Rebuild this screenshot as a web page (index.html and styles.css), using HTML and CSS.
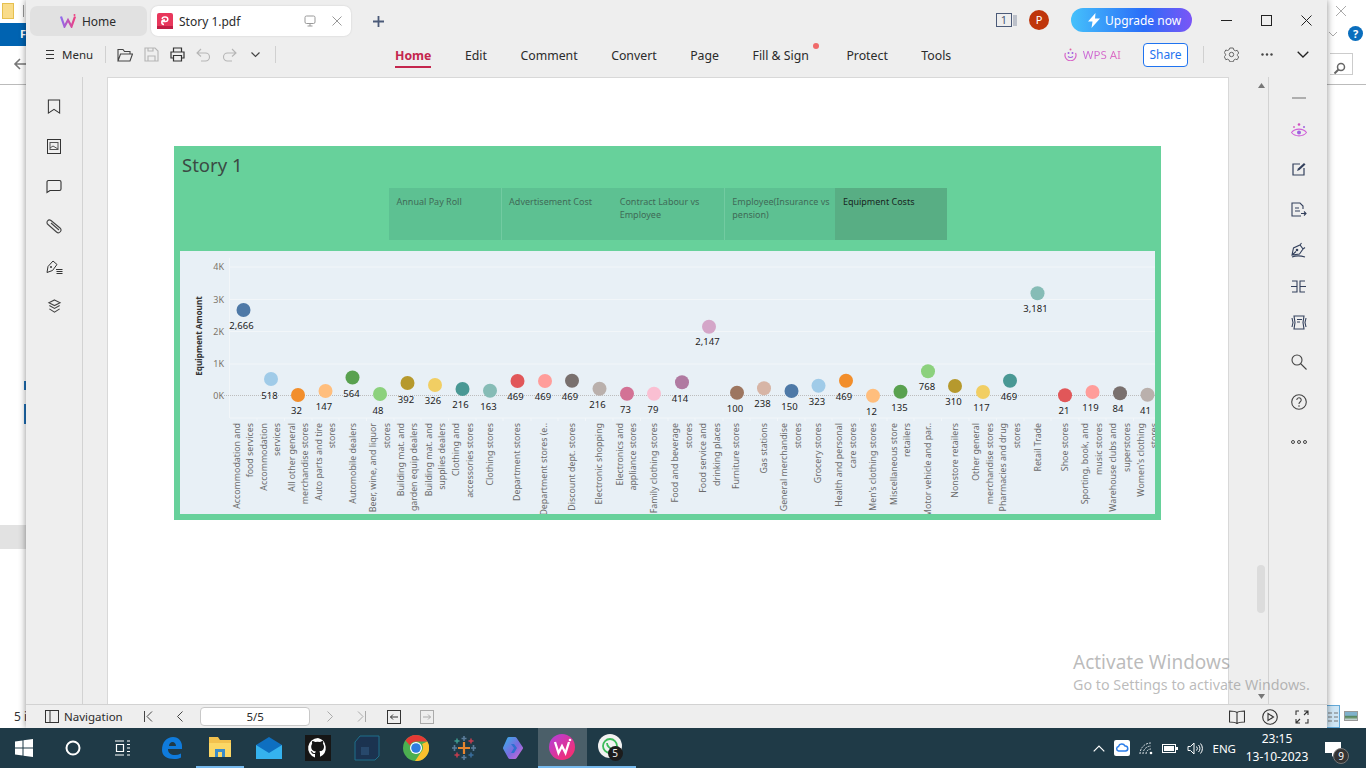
FILE: index.html
```html
<!DOCTYPE html>
<html>
<head>
    <title>Story 1.pdf</title>
    <link rel="stylesheet" href="styles.css">
</head>
<body>
<div class="desktop">
    <div class="screen">
        <!-- windows behind the reader -->
        <div class="back-left">
            <div class="back-folder"></div>
            <div class="back-pipe"></div>
            <div class="back-ribbon">F</div>
            <svg class="back-arrow" width="14" height="12" viewBox="0 0 14 12"><path d="M14 6H2M7 1L2 6l5 5" fill="none" stroke="#777" stroke-width="1.6"/></svg>
            <div class="back-rule"></div>
            <div class="back-mark one"></div>
            <div class="back-mark two"></div>
            <div class="back-row"></div>
            <div class="back-count">5 i</div>
        </div>
        <div class="back-right">
            <svg class="back-x" width="12" height="12" viewBox="0 0 12 12"><path d="M1 1l10 10M11 1L1 11" stroke="#aaa" fill="none"/></svg>
            <svg class="back-chev" width="10" height="6" viewBox="0 0 10 6"><path d="M1 1l4 4 4-4" stroke="#aaa" fill="none"/></svg>
            <div class="back-help">?</div>
            <div class="back-search">
                <svg width="13" height="13" viewBox="0 0 13 13"><circle cx="8" cy="5" r="3.5" fill="none" stroke="#666" stroke-width="1.5"/><path d="M5.5 7.5L1.5 11.5" stroke="#666" stroke-width="2"/></svg>
            </div>
            <div class="back-rule"></div>
            <div class="back-list">
                <svg width="12" height="22" viewBox="0 0 12 22"><path d="M1 7h4M7 7h4M1 11h4M7 11h4M1 15h4M7 15h4" stroke="#777"/></svg>
            </div>
            <div class="back-thumb"></div>
        </div>

        <div class="app">
            <div class="titlebar">
                <div class="tab tab-home">
                    <svg width="16" height="14" viewBox="0 0 16 14"><defs><linearGradient id="homew" x1="0" y1="0" x2="1" y2="0"><stop offset="0" stop-color="#8f6cf0"/><stop offset="1" stop-color="#ee3f80"/></linearGradient></defs><path d="M1 2.5l3.5 10L8 6l3.5 6.5L15 2.5" fill="none" stroke="url(#homew)" stroke-width="2.2"/><circle cx="14.5" cy="1" r="1" fill="#ee3f80"/></svg>
                    <span>Home</span>
                </div>
                <div class="tab tab-doc">
                    <svg class="pdf-icon" width="16" height="16" viewBox="0 0 16 16"><rect width="16" height="16" rx="2" fill="#e8375c"/><rect y="13" width="16" height="3" fill="#c01f45"/><path d="M5 8.5h3.500a2.300 2.300 0 0 0 0-4.600H7.500A2.300 2.300 0 0 0 5.200 6M8 7H7a2.200 2.200 0 0 0 0 4.400" fill="none" stroke="#fff" stroke-width="1.5"/></svg>
                    <span class="tab-name">Story 1.pdf</span>
                    <svg class="tab-screen" width="12" height="12" viewBox="0 0 12 12"><rect x="1" y="1" width="10" height="7.5" rx="1.5" fill="none" stroke="#999"/><path d="M6 9v2M3.500 11h5" stroke="#999"/></svg>
                    <svg class="tab-close" width="10" height="10" viewBox="0 0 10 10"><path d="M.5.5l9 9M9.500.5l-9 9" stroke="#999"/></svg>
                </div>
                <svg class="new-tab" width="13" height="13" viewBox="0 0 13 13"><path d="M6.5 1v11M1 6.5h11" stroke="#4b5a78" stroke-width="1.8"/></svg>
                <div class="title-right">
                    <svg class="win-count" width="21" height="14" viewBox="0 0 21 14"><rect x=".5" y=".5" width="15" height="13" fill="none" stroke="#4b5a78"/><path d="M18 2v11M20 2v11" stroke="#8a93a6"/><text x="8" y="11" class="win-count-num">1</text></svg>
                    <div class="avatar">P</div>
                    <div class="upgrade">
                        <svg width="12" height="15" viewBox="0 0 12 15"><path d="M7.5 0L0 8.5h4.500L3.500 15 12 5.500H7z" fill="#fff"/></svg>
                        <span>Upgrade now</span>
                    </div>
                    <div class="win-btn"><svg width="11" height="11" viewBox="0 0 11 11"><path d="M0 5.5h11" stroke="#222"/></svg></div>
                    <div class="win-btn"><svg width="11" height="11" viewBox="0 0 11 11"><rect x=".5" y=".5" width="10" height="10" fill="none" stroke="#222"/></svg></div>
                    <div class="win-btn"><svg width="11" height="11" viewBox="0 0 11 11"><path d="M.5.5l10 10M10.500.5l-10 10" stroke="#222"/></svg></div>
                </div>
            </div>

            <div class="toolbar">
                <div class="quick">
                    <svg width="11" height="11" viewBox="0 0 11 11"><path d="M1 1.5h8M1 5.5h8M1 9.5h8" stroke="#333"/></svg>
                    <span class="menu-label">Menu</span>
                    <i class="sep"></i>
                    <svg class="tool" width="16" height="14" viewBox="0 0 16 14"><path d="M1 13V1.500h5l1.500 2H13V6M1 13l2.500-7H15.500L13 13z" fill="none" stroke="#444" stroke-width="1.1"/></svg>
                    <svg class="tool" width="15" height="15" viewBox="0 0 15 15"><path d="M1 1h10l3 3v10H1zM4 14V9h7v5M4 1v3h5V1" fill="none" stroke="#b5b5b5" stroke-width="1.1"/></svg>
                    <svg class="tool" width="15" height="15" viewBox="0 0 15 15"><path d="M3.5 5V1h8v4M3.500 11H1V5h13v6h-2.500M3.500 8.500h8V14h-8z" fill="none" stroke="#333" stroke-width="1.2"/></svg>
                    <svg class="tool" width="15" height="14" viewBox="0 0 15 14"><path d="M5 1L1 5l4 3.500M1 5h8.500a4 4 0 0 1 0 8H5" fill="none" stroke="#b5b5b5" stroke-width="1.1"/></svg>
                    <svg class="tool" width="15" height="14" viewBox="0 0 15 14"><path d="M10 1l4 4-4 3.500M14 5H5.500a4 4 0 0 0 0 8H10" fill="none" stroke="#b5b5b5" stroke-width="1.1"/></svg>
                    <svg class="tool tool-chev" width="9" height="6" viewBox="0 0 9 6"><path d="M.5.5l4 4 4-4" fill="none" stroke="#444" stroke-width="1.2"/></svg>
                    <i class="sep sep-end"></i>
                </div>
                <div class="menu-tabs">
                    <span class="menu-tab active">Home</span>
                    <span class="menu-tab">Edit</span>
                    <span class="menu-tab">Comment</span>
                    <span class="menu-tab">Convert</span>
                    <span class="menu-tab">Page</span>
                    <span class="menu-tab">Fill &amp; Sign<b class="red-dot"></b></span>
                    <span class="menu-tab protect">Protect</span>
                    <span class="menu-tab">Tools</span>
                </div>
                <div class="tool-right">
                    <svg width="13" height="13" viewBox="0 0 13 13"><path d="M1.5 5a5.500 5.500 0 1 0 10 0" fill="none" stroke="#d868c8" stroke-width="1.2"/><path d="M4 8.500c1.500 1.200 3.500 1.200 5 0" fill="none" stroke="#a060e0" stroke-width="1.2"/><circle cx="4.5" cy="5" r="1" fill="#a060e0"/><circle cx="8.5" cy="5" r="1" fill="#a060e0"/><circle cx="6.5" cy="1.5" r="1" fill="#e060a0"/></svg>
                    <span class="wps-ai">WPS AI</span>
                    <span class="share">Share</span>
                    <i class="sep"></i>
                    <svg class="gear" width="15" height="15" viewBox="0 0 15 15"><path d="M5.800 1h3.400l.5 1.800 1.700 1 1.800-.5 1.500 2.700-1.300 1.500v1l1.300 1.500-1.500 2.700-1.800-.5-1.700 1-.5 1.600H5.800l-.5-1.600-1.700-1-1.800.5L.3 9.700l1.300-1.500v-1L.3 5.700 1.800 3l1.800.5 1.700-1z" fill="none" stroke="#666"/><circle cx="7.500" cy="7.500" r="2.200" fill="none" stroke="#666"/></svg>
                    <svg class="more" width="12" height="3" viewBox="0 0 12 3"><circle cx="1.500" cy="1.500" r="1.200" fill="#444"/><circle cx="6" cy="1.500" r="1.200" fill="#444"/><circle cx="10.500" cy="1.500" r="1.200" fill="#444"/></svg>
                    <svg class="collapse" width="12" height="7" viewBox="0 0 12 7"><path d="M.7.7L6 6 11.300.7" fill="none" stroke="#222" stroke-width="1.3"/></svg>
                </div>
            </div>

            <div class="workspace">
                <div class="left-rail">
                    <svg width="14" height="16" viewBox="0 0 14 16"><path d="M1 1h12v14l-6-4-6 4z" fill="none" stroke="#333" stroke-width="1.1"/></svg>
                    <svg width="14" height="15" viewBox="0 0 14 15"><rect x=".5" y=".5" width="13" height="14" fill="none" stroke="#333"/><rect x="3" y="3.500" width="8" height="7" fill="none" stroke="#555"/><path d="M3 9l3-2 5 3" fill="none" stroke="#555"/></svg>
                    <svg width="16" height="14" viewBox="0 0 16 14"><path d="M1 13V2.500a1.500 1.500 0 0 1 1.500-1.500h11a1.500 1.500 0 0 1 1.500 1.500v7a1.500 1.500 0 0 1-1.500 1.500H4z" fill="none" stroke="#333" stroke-width="1.1"/></svg>
                    <svg width="16" height="15" viewBox="0 0 16 15"><path d="M5 1.500l9 7.500a2.500 2.500 0 0 1-3.500 4L2 5.500A2.400 2.400 0 0 1 5 1.500zM5 4l8 7" fill="none" stroke="#444" stroke-width="1.1"/></svg>
                    <svg width="17" height="15" viewBox="0 0 17 15"><path d="M1 13.500l1-6 5-5.500 4 3.500-4.500 6zM10 10.500h6.500M10.500 12.500h6M10.500 14.500h6" fill="none" stroke="#333"/><circle cx="5" cy="8" r="1" fill="#333"/></svg>
                    <svg width="15" height="16" viewBox="0 0 15 16"><path d="M7.5 1l6 3-6 3-6-3zM2 7l5.500 3L13 7M2 10.500l5.500 3.500L13 10.500" fill="none" stroke="#444" stroke-width="1.1"/></svg>
                </div>

                <div class="doc-area">
                    <div class="page">
                        <div class="story">
                            <div class="story-title">Story 1</div>
                            <div class="story-tabs">
                                <div class="story-tab">Annual Pay Roll</div>
                                <div class="story-tab split">Advertisement Cost</div>
                                <div class="story-tab">Contract Labour vs Employee</div>
                                <div class="story-tab split">Employee(Insurance vs pension)</div>
                                <div class="story-tab current">Equipment Costs</div>
                            </div>
                            <div class="chart">
                                <svg width="975" height="263" viewBox="180 251 975 263">
                                    <g class="grid">
                                        <path d="M230 267H1155M230 299.5H1155M230 331.5H1155M230 364H1155"/>
                                        <path d="M229.5 258V418M230 418H1155"/>
                                        <path d="M257 418v3M284.5 418v3M312 418v3M339 418v3M366.5 418v3M394 418v3M421 418v3M448.5 418v3M476 418v3M503 418v3M531 418v3M558 418v3M585.5 418v3M613 418v3M640.5 418v3M668 418v3M695 418v3M723 418v3M750 418v3M777.5 418v3M805 418v3M832 418v3M859.5 418v3M887 418v3M914 418v3M941.5 418v3M969 418v3M996.5 418v3M1024 418v3M1051 418v3M1079 418v3M1106 418v3M1133.5 418v3"/>
                                    </g>
                                    <path class="zero" d="M224 395.5H1155"/>

                                    <g class="tick-label">
                                        <text x="224" y="270">4K</text>
                                        <text x="224" y="303">3K</text>
                                        <text x="224" y="335">2K</text>
                                        <text x="224" y="367">1K</text>
                                        <text x="224" y="399">0K</text>
                                    </g>
                                    <text class="axis-title" transform="translate(202 336) rotate(-90)">Equipment Amount</text>

                                    <g>
                                        <circle cx="243.5" cy="310" r="7" fill="#4e79a7"/>
                                        <circle cx="271" cy="379" r="7" fill="#a0cbe8"/>
                                        <circle cx="298" cy="395" r="7" fill="#f28e2b"/>
                                        <circle cx="325.5" cy="391" r="7" fill="#ffbe7d"/>
                                        <circle cx="352.5" cy="377.5" r="7" fill="#59a14f"/>
                                        <circle cx="380" cy="394" r="7" fill="#8cd17d"/>
                                        <circle cx="407.5" cy="383" r="7" fill="#b6992d"/>
                                        <circle cx="435" cy="385" r="7" fill="#f1ce63"/>
                                        <circle cx="462.5" cy="389" r="7" fill="#499894"/>
                                        <circle cx="490" cy="390.7" r="7" fill="#86bcb6"/>
                                        <circle cx="517.5" cy="381" r="7" fill="#e15759"/>
                                        <circle cx="545" cy="381" r="7" fill="#ff9d9a"/>
                                        <circle cx="572" cy="380.7" r="7" fill="#79706e"/>
                                        <circle cx="599.5" cy="388.7" r="7" fill="#bab0ac"/>
                                        <circle cx="627" cy="393.7" r="7" fill="#d37295"/>
                                        <circle cx="654" cy="393.7" r="7" fill="#fabfd2"/>
                                        <circle cx="682" cy="382.3" r="7" fill="#b07aa1"/>
                                        <circle cx="709" cy="326.7" r="7" fill="#d4a6c8"/>
                                        <circle cx="737" cy="392.7" r="7" fill="#9d7660"/>
                                        <circle cx="764" cy="388.3" r="7" fill="#d7b5a6"/>
                                        <circle cx="791.5" cy="391" r="7" fill="#4e79a7"/>
                                        <circle cx="818.5" cy="385.7" r="7" fill="#a0cbe8"/>
                                        <circle cx="846" cy="380.7" r="7" fill="#f28e2b"/>
                                        <circle cx="873" cy="395.7" r="7" fill="#ffbe7d"/>
                                        <circle cx="900.5" cy="391.7" r="7" fill="#59a14f"/>
                                        <circle cx="928" cy="371.3" r="7" fill="#8cd17d"/>
                                        <circle cx="955" cy="386" r="7" fill="#b6992d"/>
                                        <circle cx="983" cy="392" r="7" fill="#f1ce63"/>
                                        <circle cx="1010" cy="380.7" r="7" fill="#499894"/>
                                        <circle cx="1037.5" cy="293.3" r="7" fill="#86bcb6"/>
                                        <circle cx="1065" cy="395.3" r="7" fill="#e15759"/>
                                        <circle cx="1092.5" cy="392" r="7" fill="#ff9d9a"/>
                                        <circle cx="1120" cy="393.3" r="7" fill="#79706e"/>
                                        <circle cx="1147.5" cy="394.7" r="7" fill="#bab0ac"/>
                                    </g>

                                    <g class="value">
                                        <text x="241.5" y="328.5">2,666</text>
                                        <text x="269.5" y="398.5">518</text>
                                        <text x="296.5" y="413.5">32</text>
                                        <text x="324" y="409.5">147</text>
                                        <text x="351.5" y="396.5">564</text>
                                        <text x="378" y="413.5">48</text>
                                        <text x="406" y="402.5">392</text>
                                        <text x="433" y="404">326</text>
                                        <text x="460.5" y="407.5">216</text>
                                        <text x="488.5" y="409.5">163</text>
                                        <text x="515.5" y="399.5">469</text>
                                        <text x="543" y="399.5">469</text>
                                        <text x="570" y="399.5">469</text>
                                        <text x="597.5" y="407.5">216</text>
                                        <text x="625.5" y="412.5">73</text>
                                        <text x="653" y="412.5">79</text>
                                        <text x="680" y="401.5">414</text>
                                        <text x="707.5" y="345">2,147</text>
                                        <text x="735" y="411.5">100</text>
                                        <text x="762.5" y="407">238</text>
                                        <text x="789.5" y="409.5">150</text>
                                        <text x="817" y="404.5">323</text>
                                        <text x="844" y="399.5">469</text>
                                        <text x="871.5" y="414.5">12</text>
                                        <text x="899.5" y="410.5">135</text>
                                        <text x="927" y="390">768</text>
                                        <text x="953.5" y="404.5">310</text>
                                        <text x="981.5" y="411">117</text>
                                        <text x="1009" y="399.5">469</text>
                                        <text x="1035.5" y="312">3,181</text>
                                        <text x="1064" y="414">21</text>
                                        <text x="1090.5" y="411">119</text>
                                        <text x="1118" y="411.5">84</text>
                                        <text x="1145.5" y="413.5">41</text>
                                    </g>

                                    <g class="cat">
                                        <text transform="translate(240 423) rotate(-90)">Accommodation and</text>
                                        <text transform="translate(253 423) rotate(-90)">food services</text>
                                        <text transform="translate(267 423) rotate(-90)">Accommodation</text>
                                        <text transform="translate(280 423) rotate(-90)">services</text>
                                        <text transform="translate(295 423) rotate(-90)">All other general</text>
                                        <text transform="translate(308 423) rotate(-90)">merchandise stores</text>
                                        <text transform="translate(322 423) rotate(-90)">Auto parts and tire</text>
                                        <text transform="translate(335 423) rotate(-90)">stores</text>
                                        <text transform="translate(356 423) rotate(-90)">Automobile dealers</text>
                                        <text transform="translate(376 423) rotate(-90)">Beer, wine, and liquor</text>
                                        <text transform="translate(390 423) rotate(-90)">stores</text>
                                        <text transform="translate(404 423) rotate(-90)">Building mat. and</text>
                                        <text transform="translate(417 423) rotate(-90)">garden equip dealers</text>
                                        <text transform="translate(432 423) rotate(-90)">Building mat. and</text>
                                        <text transform="translate(445 423) rotate(-90)">supplies dealers</text>
                                        <text transform="translate(459 423) rotate(-90)">Clothing and</text>
                                        <text transform="translate(473 423) rotate(-90)">accessories stores</text>
                                        <text transform="translate(493 423) rotate(-90)">Clothing stores</text>
                                        <text transform="translate(520 423) rotate(-90)">Department stores</text>
                                        <text transform="translate(547 423) rotate(-90)">Department stores (e..</text>
                                        <text transform="translate(575 423) rotate(-90)">Discount dept. stores</text>
                                        <text transform="translate(602 423) rotate(-90)">Electronic shopping</text>
                                        <text transform="translate(623 423) rotate(-90)">Electronics and</text>
                                        <text transform="translate(636 423) rotate(-90)">appliance stores</text>
                                        <text transform="translate(657 423) rotate(-90)">Family clothing stores</text>
                                        <text transform="translate(678 423) rotate(-90)">Food and beverage</text>
                                        <text transform="translate(692 423) rotate(-90)">stores</text>
                                        <text transform="translate(706 423) rotate(-90)">Food service and</text>
                                        <text transform="translate(720 423) rotate(-90)">drinking places</text>
                                        <text transform="translate(739 423) rotate(-90)">Furniture stores</text>
                                        <text transform="translate(767 423) rotate(-90)">Gas stations</text>
                                        <text transform="translate(787 423) rotate(-90)">General merchandise</text>
                                        <text transform="translate(801 423) rotate(-90)">stores</text>
                                        <text transform="translate(821 423) rotate(-90)">Grocery stores</text>
                                        <text transform="translate(842 423) rotate(-90)">Health and personal</text>
                                        <text transform="translate(856 423) rotate(-90)">care stores</text>
                                        <text transform="translate(876 423) rotate(-90)">Men's clothing stores</text>
                                        <text transform="translate(897 423) rotate(-90)">Miscellaneous store</text>
                                        <text transform="translate(910 423) rotate(-90)">retailers</text>
                                        <text transform="translate(931 423) rotate(-90)">Motor vehicle and par..</text>
                                        <text transform="translate(958 423) rotate(-90)">Nonstore retailers</text>
                                        <text transform="translate(979 423) rotate(-90)">Other general</text>
                                        <text transform="translate(993 423) rotate(-90)">merchandise stores</text>
                                        <text transform="translate(1006 423) rotate(-90)">Pharmacies and drug</text>
                                        <text transform="translate(1020 423) rotate(-90)">stores</text>
                                        <text transform="translate(1041 423) rotate(-90)">Retail Trade</text>
                                        <text transform="translate(1068 423) rotate(-90)">Shoe stores</text>
                                        <text transform="translate(1088 423) rotate(-90)">Sporting, book, and</text>
                                        <text transform="translate(1102 423) rotate(-90)">music stores</text>
                                        <text transform="translate(1116 423) rotate(-90)">Warehouse clubs and</text>
                                        <text transform="translate(1130 423) rotate(-90)">superstores</text>
                                        <text transform="translate(1144 423) rotate(-90)">Women's clothing</text>
                                        <text transform="translate(1157 423) rotate(-90)">stores</text>
                                    </g>
                                </svg>
                            </div>
                        </div>
                    </div>
                    <div class="scrollbar">
                        <svg class="arrow-up" width="7" height="5" viewBox="0 0 7 5"><path d="M3.5 0L7 5H0z" fill="#777"/></svg>
                        <div class="scroll-thumb"></div>
                        <svg class="arrow-down" width="7" height="5" viewBox="0 0 7 5"><path d="M3.5 5L7 0H0z" fill="#777"/></svg>
                    </div>
                </div>

                <div class="right-rail">
                    <svg width="14" height="2" viewBox="0 0 14 2"><path d="M0 1h14" stroke="#999" stroke-width="1.5"/></svg>
                    <svg width="16" height="15" viewBox="0 0 16 15"><path d="M.5 9.500C4 5 12 5 15.500 9.500 12 14 4 14 .5 9.500z" fill="none" stroke="#d060d8" stroke-width="1.1"/><circle cx="8" cy="9.5" r="2" fill="#a060e0"/><circle cx="8" cy="1.5" r="1.3" fill="#d050c0"/><circle cx="3" cy="4" r="1" fill="#d868c8"/><circle cx="13" cy="4" r="1" fill="#a060e0"/></svg>
                    <svg width="14" height="14" viewBox="0 0 14 14"><path d="M8 2H1v11h11V6" fill="none" stroke="#33405c" stroke-width="1.2"/><path d="M5 9l1-2.500L12 1l1.500 1.500L7.500 8z" fill="#33405c"/></svg>
                    <svg width="16" height="15" viewBox="0 0 16 15"><path d="M12 7V4L9 1H1v13h9M4 6h4M4 9h5M10 11.500h5M13 9.500l2 2-2 2" fill="none" stroke="#33405c" stroke-width="1.1"/></svg>
                    <svg width="16" height="16" viewBox="0 0 16 16"><path d="M1 13l1.500-7L9 3l3 4-3.500 5zM1 13l4-3.500M9 3l1.500-2M12 7l2-1.500M1 15c4-1.500 8-1.500 13 0" fill="none" stroke="#33405c" stroke-width="1.1"/><circle cx="6" cy="8" r="1.3" fill="#33405c"/></svg>
                    <svg width="15" height="13" viewBox="0 0 15 13"><path d="M1 1h5v11H1M14 1H9v11h5M0 6.500h6M9 6.500h6" fill="none" stroke="#33405c" stroke-width="1.1"/></svg>
                    <svg width="16" height="15" viewBox="0 0 16 15"><path d="M3 1h10l-1 6.500 1 6.500H3l1-6.500zM1 3l1 4.500L1 12M15 3l-1 4.500 1 4.500M6 4.500h5M6 7h3" fill="none" stroke="#33405c" stroke-width="1.1"/></svg>
                    <svg width="16" height="16" viewBox="0 0 16 16"><circle cx="6" cy="6" r="5" fill="none" stroke="#444" stroke-width="1.1"/><path d="M9.5 9.500L15.500 15.500" stroke="#444" stroke-width="1.1"/></svg>
                    <svg width="16" height="16" viewBox="0 0 16 16"><circle cx="8" cy="8" r="7.3" fill="none" stroke="#444" stroke-width="1.1"/><path d="M5.8 6a2.200 2.200 0 1 1 3.500 1.800C8.300 8.500 8 9 8 10" fill="none" stroke="#444" stroke-width="1.1"/><circle cx="8" cy="12" r=".8" fill="#444"/></svg>
                    <svg width="16" height="4" viewBox="0 0 16 4"><circle cx="2" cy="2" r="1.5" fill="none" stroke="#444"/><circle cx="8" cy="2" r="1.5" fill="none" stroke="#444"/><circle cx="14" cy="2" r="1.5" fill="none" stroke="#444"/></svg>
                </div>
            </div>

            <div class="statusbar">
                <svg class="nav-icon" width="14" height="13" viewBox="0 0 14 13"><rect x=".5" y=".5" width="13" height="12" fill="none" stroke="#333"/><path d="M5 .5v12" stroke="#333"/></svg>
                <span class="nav-label">Navigation</span>
                <svg class="pg first" width="9" height="11" viewBox="0 0 9 11"><path d="M.5 0v11M8 .5l-5 5 5 5" fill="none" stroke="#444"/></svg>
                <svg class="pg prev" width="6" height="11" viewBox="0 0 6 11"><path d="M5.5.5l-5 5 5 5" fill="none" stroke="#444"/></svg>
                <div class="page-box">5/5</div>
                <svg class="pg next" width="6" height="11" viewBox="0 0 6 11"><path d="M.5.5l5 5-5 5" fill="none" stroke="#aaa"/></svg>
                <svg class="pg last" width="9" height="11" viewBox="0 0 9 11"><path d="M8.5 0v11M1 .5l5 5-5 5" fill="none" stroke="#aaa"/></svg>
                <svg class="pg hist-back" width="14" height="14" viewBox="0 0 14 14"><rect x=".5" y=".5" width="13" height="13" fill="none" stroke="#333"/><path d="M11 7H3.500M6 4.500L3.500 7 6 9.500" fill="none" stroke="#333"/></svg>
                <svg class="pg hist-next" width="14" height="14" viewBox="0 0 14 14"><rect x=".5" y=".5" width="13" height="13" fill="none" stroke="#aaa"/><path d="M3 7h7.500M8 4.500L10.500 7 8 9.500" fill="none" stroke="#aaa"/></svg>
                <div class="status-right">
                    <svg width="16" height="14" viewBox="0 0 16 14"><path d="M8 2.500C6 1 3 1 .5 1v11c2.500 0 5.500 0 7.500 1.500 2-1.500 5-1.500 7.500-1.500V1C13 1 10 1 8 2.500zM8 2.500v11" fill="none" stroke="#333" stroke-width="1.1"/></svg>
                    <svg width="16" height="16" viewBox="0 0 16 16"><circle cx="8" cy="8" r="7.3" fill="none" stroke="#333" stroke-width="1.1"/><path d="M6 4.500L11.500 8 6 11.500z" fill="none" stroke="#333" stroke-width="1.1"/></svg>
                    <svg width="14" height="14" viewBox="0 0 14 14"><path d="M9 1h4v4M13 1L9 5M5 13H1V9M1 13l4-4M1 5V1h3M13 9v4h-3" fill="none" stroke="#333" stroke-width="1.1"/></svg>
                </div>
            </div>
        </div>

        <div class="activate">
            <div class="activate-head">Activate Windows</div>
            <div class="activate-sub">Go to Settings to activate Windows.</div>
        </div>
    </div>

    <div class="taskbar">
        <div class="tb-item"><svg width="18" height="18" viewBox="0 0 18 18"><path d="M0 2.500l7.500-1v7H0zM8.500 1.300L18 0v8.500H8.500zM0 9.500h7.500v7l-7.500-1zM8.500 9.500H18V18l-9.500-1.300z" fill="#fff"/></svg></div>
        <div class="tb-item"><svg width="16" height="16" viewBox="0 0 16 16"><circle cx="8" cy="8" r="6.5" fill="none" stroke="#fff" stroke-width="2"/></svg></div>
        <div class="tb-item"><svg width="17" height="16" viewBox="0 0 17 16"><path d="M1 1h9M1 15h9M2.500 4.500h7v7h-7zM13 1h3M13 4.500h3M13 8h3M13 11.500h3M13 15h3" fill="none" stroke="#fff" stroke-width="1.2"/></svg></div>
        <div class="tb-item"><svg width="24" height="24" viewBox="0 0 24 24"><path d="M3 14C3 6 8 1 14 1c6 0 9 5 9 9v3H9c0 4 3 6 7 6 2 0 4-.5 6-1.500v4c-2 1-4 1.500-7 1.500-7 0-12-3-12-9zm7-4h7c0-2-1.500-4-3.500-4S10 8 10 10z" fill="#0f7bdc"/></svg></div>
        <div class="tb-item lit"><svg width="24" height="22" viewBox="0 0 24 22"><path d="M1 1h9l2 3h11v16H1z" fill="#f2c14e"/><path d="M1 7h22v14H1z" fill="#fbd766"/><rect x="7" y="13" width="10" height="8" fill="#3a8bc9"/><rect x="10" y="16" width="4" height="5" fill="#fbd766"/></svg></div>
        <div class="tb-item"><svg width="26" height="22" viewBox="0 0 26 22"><path d="M0 8L13 0l13 8v14H0z" fill="#0e6fc0"/><path d="M0 8l13 8 13-8v14H0z" fill="#35b2ee"/></svg></div>
        <div class="tb-item"><svg width="26" height="26" viewBox="0 0 26 26"><rect width="26" height="26" fill="#161616"/><path d="M13 3a10 10 0 0 0-3 19.500v-3.500c-3 .5-3.500-1.500-3.500-1.500-.5-1.200-1-1.500-1-1.500 1.200-.5 2 1 2 1 .8 1.500 2.300 1 2.800.8 0-.6.300-1 .6-1.300-2.300-.3-4.700-1.200-4.700-5 0-1.100.4-2 1-2.700-.2-.3-.4-1.300.1-2.700 0 0 .9-.3 2.800 1a9.500 9.500 0 0 1 5 0c1.900-1.300 2.800-1 2.800-1 .5 1.400.3 2.400.1 2.700.6.7 1 1.600 1 2.700 0 3.800-2.400 4.700-4.700 5 .4.300.7.900.7 1.800v3.500A10 10 0 0 0 13 3z" fill="#fff"/></svg></div>
        <div class="tb-item"><svg width="26" height="26" viewBox="0 0 26 26"><path d="M6 1h19v20l-4 4H1V7z" fill="#1b3350" stroke="#1f6f8b"/><path d="M7 12h8v8H7z" fill="#27486b"/></svg></div>
        <div class="tb-item"><svg width="26" height="26" viewBox="0 0 26 26"><circle cx="13" cy="13" r="13" fill="#4caf50"/><path d="M13 0a13 13 0 0 1 11.300 6.500H13A6.500 6.500 0 0 0 7 10.500L2.500 5.500A13 13 0 0 1 13 0z" fill="#e53935"/><path d="M24.300 6.500A13 13 0 0 1 12 26l6.500-9.500A6.500 6.500 0 0 0 19 9z" fill="#fbc02d"/><circle cx="13" cy="13" r="6" fill="#fff"/><circle cx="13" cy="13" r="4.8" fill="#2f7de1"/></svg></div>
        <div class="tb-item"><svg width="26" height="26" viewBox="0 0 26 26"><path d="M13 7v12M7 13h12" stroke="#e8852e" stroke-width="2.2"/><path d="M13 1v5M10.500 3.500h5M13 20v5M10.500 22.500h5" stroke="#5b7d9c" stroke-width="1.6"/><path d="M3.500 10v6M1 13h5M22.500 10v6M20 13h5" stroke="#5b7d9c" stroke-width="1.6"/><path d="M6 3.500v5M3.500 6h5" stroke="#3f9b8f" stroke-width="1.5"/><path d="M20 3.500v5M17.500 6h5" stroke="#c63d4f" stroke-width="1.5"/><path d="M6 17.500v5M3.500 20h5" stroke="#c63d4f" stroke-width="1.5"/><path d="M20 17.500v5M17.500 20h5" stroke="#3b6f9e" stroke-width="1.5"/></svg></div>
        <div class="tb-item"><svg width="22" height="24" viewBox="0 0 22 24"><defs><linearGradient id="cop" x1="0" y1="0" x2="1" y2="1"><stop offset="0" stop-color="#3fa6e8"/><stop offset=".55" stop-color="#7a6be0"/><stop offset="1" stop-color="#c86ad8"/></linearGradient></defs><path d="M7 3h6l6 9-6 9H8l-5-9z" fill="url(#cop)" stroke="url(#cop)" stroke-width="4" stroke-linejoin="round"/><path d="M9 8h3l3 4-3 5H9l3-5z" fill="#2f6fd0"/></svg></div>
        <div class="tb-item active-app"><svg width="26" height="26" viewBox="0 0 26 26"><defs><linearGradient id="wpsg" x1="0" y1="0" x2="1" y2="1"><stop offset="0" stop-color="#b13fe0"/><stop offset="1" stop-color="#ff2c60"/></linearGradient></defs><circle cx="13" cy="13" r="13" fill="url(#wpsg)"/><path d="M6 8l3.500 11 3.500-7 3.500 7L20 8" fill="none" stroke="#fff" stroke-width="2.3"/><circle cx="21" cy="6" r="1.3" fill="#fff"/></svg></div>
        <div class="tb-item lit"><svg width="26" height="26" viewBox="0 0 26 26"><circle cx="12" cy="12" r="12" fill="#f2f2f2"/><circle cx="12" cy="12" r="7" fill="none" stroke="#3dbb5a" stroke-width="1.8"/><path d="M9 9c0 3 3 6 6 6" fill="none" stroke="#3dbb5a" stroke-width="1.8"/></svg><span class="tb-badge">5</span></div>

        <div class="tray">
            <svg width="12" height="7" viewBox="0 0 12 7"><path d="M.7 6.300L6 1l5.300 5.300" fill="none" stroke="#fff" stroke-width="1.2"/></svg>
            <svg class="tray-cloud" width="16" height="16" viewBox="0 0 16 16"><rect width="16" height="16" rx="2" fill="#fff"/><path d="M4.500 11a2.300 2.300 0 0 1 0-4.500A3.500 3.500 0 0 1 11 6a2.500 2.500 0 0 1 .5 5z" fill="none" stroke="#2b7de9" stroke-width="1.5"/></svg>
            <svg width="14" height="13" viewBox="0 0 14 13"><path d="M1 12a11 11 0 0 1 11-11M4 12a8 8 0 0 1 8-8M7 12a5 5 0 0 1 5-5" fill="none" stroke="#dfe6ea" stroke-dasharray="2 1"/><circle cx="12" cy="11" r="1.3" fill="#fff"/></svg>
            <svg width="16" height="9" viewBox="0 0 16 9"><rect x=".5" y=".5" width="13" height="8" fill="none" stroke="#fff"/><rect x="2" y="2" width="10" height="5" fill="#fff"/><rect x="14" y="3" width="2" height="3" fill="#fff"/></svg>
            <svg width="16" height="13" viewBox="0 0 16 13"><path d="M1 4.500h2.500L7 1v11L3.500 8.500H1zM9.500 4.500a3 3 0 0 1 0 4M11.500 3a5 5 0 0 1 0 7M13.500 1.500a7.500 7.500 0 0 1 0 10" fill="none" stroke="#fff"/></svg>
            <span class="tray-lang">ENG</span>
            <div class="clock"><div>23:15</div><div>13-10-2023</div></div>
            <div class="notify">
                <svg width="16" height="15" viewBox="0 0 16 15"><path d="M0 0h16v11h-6l-3 4v-4H0z" fill="#fff"/></svg>
                <span class="notify-badge">9</span>
            </div>
        </div>
    </div>
</div>
</body>
</html>
```

FILE: styles.css
```css
* {
    box-sizing: border-box;
}
body {
    margin: 0;
    width: 1366px;
    height: 768px;
    overflow: hidden;
    background: #fff;
    font-family: "Noto Sans", "Open Sans", sans-serif;
    color: #2b2b2b;
}
.desktop {
    display: flex;
    flex-direction: column;
    height: 768px;
}
.screen {
    position: relative;
    height: 728px;
    overflow: hidden;
}

/* windows behind */
.back-left {
    position: absolute;
    left: 0;
    top: 0;
    width: 26px;
    height: 728px;
    font-size: 12px;
}
.back-folder {
    position: absolute;
    left: 2px;
    top: 3px;
    width: 12px;
    height: 16px;
    background: #f9dc8a;
    border: 1px solid #e6c04f;
}
.back-pipe {
    position: absolute;
    left: 23px;
    top: 5px;
    width: 1px;
    height: 12px;
    background: #999;
}
.back-ribbon {
    position: absolute;
    left: 0;
    top: 23px;
    width: 26px;
    height: 23px;
    padding: 3px 0 0 20px;
    background: #0063b1;
    color: #fff;
    font-weight: 700;
    font-size: 11px;
}
.back-arrow {
    position: absolute;
    left: 13px;
    top: 58px;
}
.back-rule {
    position: absolute;
    left: 0;
    right: 0;
    top: 84px;
    height: 1px;
    background: #bbb;
}
.back-mark {
    position: absolute;
    left: 24px;
    width: 2px;
    background: #1f6fb5;
}
.back-mark.one {
    top: 381px;
    height: 9px;
}
.back-mark.two {
    top: 404px;
    height: 20px;
}
.back-row {
    position: absolute;
    left: 0;
    top: 525px;
    width: 26px;
    height: 24px;
    background: #e2e2e2;
}
.back-count {
    position: absolute;
    left: 14px;
    top: 708px;
    color: #333;
    white-space: nowrap;
}
.back-right {
    position: absolute;
    left: 1327px;
    top: 0;
    width: 39px;
    height: 728px;
}
.back-x {
    position: absolute;
    left: 8px;
    top: 5px;
}
.back-chev {
    position: absolute;
    left: 1px;
    top: 31px;
}
.back-help {
    position: absolute;
    left: 21px;
    top: 26px;
    width: 15px;
    height: 15px;
    border-radius: 50%;
    background: #0a6ebd;
    color: #fff;
    font-size: 11px;
    font-weight: 700;
    line-height: 15px;
    text-align: center;
}
.back-search {
    position: absolute;
    left: 3px;
    top: 53px;
    width: 23px;
    height: 22px;
    padding: 4px 0 0 3px;
    border: 1px solid #ccc;
    border-left: none;
}
.back-list {
    position: absolute;
    left: 0;
    top: 705px;
    width: 13px;
    height: 23px;
    background: #cfe6f5;
    border: 1px solid #63a9d8;
    border-left: none;
}
.back-thumb {
    position: absolute;
    left: 17px;
    top: 711px;
    width: 14px;
    height: 10px;
    border: 1px solid #999;
    background: linear-gradient(#7fb1cc 40%, #4e7f4c 60%, #d0dde4);
}

/* reader window */
.app {
    position: absolute;
    left: 26px;
    top: 0;
    width: 1301px;
    height: 728px;
    display: flex;
    flex-direction: column;
    background: #eeeeee;
    box-shadow: 0 0 7px rgba(0, 0, 0, .45);
}
.titlebar {
    display: flex;
    align-items: flex-start;
    height: 38px;
    padding: 6px 1px 0 4px;
    gap: 4px;
    flex: none;
}
.tab {
    display: flex;
    align-items: center;
    height: 30px;
    border-radius: 7px;
    font-size: 12px;
}
.tab-home {
    width: 117px;
    justify-content: center;
    gap: 6px;
    padding-right: 1px;
    background: #e1e1e1;
}
.tab-doc {
    width: 200px;
    padding-left: 6px;
    background: #fff;
    box-shadow: 0 0 2px rgba(0, 0, 0, .15);
}
.pdf-icon {
    margin-right: 6px;
}
.tab-screen {
    margin-left: auto;
}
.tab-close {
    margin: 0 9px 0 16px;
}
.new-tab {
    margin: 9px 0 0 17px;
}
.title-right {
    display: flex;
    align-items: center;
    height: 28px;
    margin-left: auto;
}
.win-count-num {
    font-size: 11px;
    fill: #4b5a78;
    text-anchor: middle;
}
.avatar {
    width: 20px;
    height: 20px;
    margin-left: 12px;
    border-radius: 50%;
    background: #bf360c;
    color: #fff;
    font-size: 11px;
    line-height: 20px;
    text-align: center;
}
.upgrade {
    display: flex;
    align-items: center;
    gap: 5px;
    width: 121px;
    height: 24px;
    margin: 0 14px 0 22px;
    padding-left: 17px;
    border-radius: 12px;
    background: linear-gradient(90deg, #45c1fb, #2a6df8 60%, #7b55f6);
    color: #fff;
    font-size: 12px;
}
.win-btn {
    display: flex;
    justify-content: center;
    align-items: center;
    width: 40px;
    height: 28px;
}

.toolbar {
    display: flex;
    align-items: center;
    height: 39px;
    padding-bottom: 6px;
    flex: none;
}
.quick {
    display: flex;
    align-items: center;
    width: 369px;
    padding-left: 19px;
}
.menu-label {
    margin-left: 6px;
    font-size: 11.5px;
}
.sep {
    display: block;
    width: 1px;
    height: 17px;
    background: #d0d0d0;
}
.quick .sep {
    margin-left: 12px;
}
.quick .sep-end {
    margin-left: 15px;
}
.quick .tool {
    margin-left: 11px;
}
.quick .tool-chev {
    margin-left: 14px;
}
.menu-tabs {
    display: flex;
    gap: 33.5px;
    font-size: 12.3px;
}
.menu-tab {
    position: relative;
    top: 1px;
    height: 24px;
    line-height: 24px;
    white-space: nowrap;
}
.menu-tab.protect {
    margin-left: 4px;
}
.menu-tab.active {
    color: #c4264d;
    font-weight: 700;
}
.menu-tab.active::after {
    content: "";
    position: absolute;
    left: 0;
    right: 0;
    bottom: 0;
    height: 2px;
    background: #c4264d;
}
.red-dot {
    position: absolute;
    right: -10px;
    top: -1px;
    width: 6px;
    height: 6px;
    border-radius: 50%;
    background: #f06a6a;
}
.tool-right {
    display: flex;
    align-items: center;
    margin-left: auto;
}
.wps-ai {
    margin: 0 22px 0 6px;
    font-size: 11.5px;
    background: linear-gradient(90deg, #c868d8, #e070c0);
    -webkit-background-clip: text;
    color: transparent;
}
.share {
    width: 45px;
    height: 24px;
    margin-right: 15px;
    border: 1px solid #1f73f0;
    border-radius: 4px;
    background: #fff;
    color: #1f73f0;
    font-size: 12px;
    line-height: 22px;
    text-align: center;
}
.gear {
    margin-left: 20px;
}
.more {
    margin-left: 22px;
}
.collapse {
    margin: 0 18px 0 24px;
}

.workspace {
    display: flex;
    flex: 1;
    min-height: 0;
}
.left-rail {
    display: flex;
    flex-direction: column;
    align-items: center;
    gap: 25px;
    width: 57px;
    padding-top: 22px;
    border-right: 1px solid #d2d2d2;
    flex: none;
}
.left-rail svg {
    height: 15px;
}
.doc-area {
    display: flex;
    flex: 1;
    padding-left: 24px;
    min-width: 0;
}
.page {
    width: 1122px;
    height: 627px;
    padding: 68px 0 0 66px;
    background: #fff;
    border-top: 1px solid #d8d8d8;
    border-left: 1px solid #d8d8d8;
    border-right: 1px solid #d8d8d8;
    flex: none;
}
.story {
    width: 987px;
    height: 374px;
    padding: 6px;
    background: #67d19b;
}
.story-title {
    height: 36px;
    padding: 2px 0 0 2px;
    font-size: 18.5px;
    line-height: 22px;
    color: #3b4a44;
}
.story-tabs {
    display: grid;
    grid-template-columns: repeat(5, 1fr);
    width: 558px;
    height: 52px;
    margin: 0 0 11px 209px;
    background: #5dc192;
    font-size: 9px;
    color: #3f6b57;
}
.story-tab {
    padding: 7px 2px 0 7.5px;
    line-height: 13px;
}
.story-tab.split {
    border-left: 1px solid #72cba1;
}
.story-tab.current {
    background: #58ae84;
    color: #17261f;
}
.chart {
    width: 975px;
    height: 263px;
    background: #e8f0f6;
    overflow: hidden;
}
.chart svg {
    display: block;
}
.grid path {
    fill: none;
    stroke: #f2f6f9;
}
.zero {
    stroke: #bdbdbd;
    stroke-dasharray: 1 1;
}
.tick-label text {
    font-size: 9px;
    fill: #7c7469;
    text-anchor: end;
}
.axis-title {
    font-size: 8.2px;
    font-weight: 700;
    fill: #333;
    text-anchor: middle;
}
.value text {
    font-size: 9.5px;
    fill: #222;
    text-anchor: middle;
}
.cat text {
    font-size: 8.8px;
    fill: #6b6b6b;
    text-anchor: end;
}
.scrollbar {
    position: relative;
    width: 40px;
    border-right: 1px solid #d2d2d2;
    flex: none;
}
.arrow-up {
    position: absolute;
    left: 29px;
    top: 6px;
}
.arrow-down {
    position: absolute;
    left: 29px;
    top: 617px;
}
.scroll-thumb {
    position: absolute;
    left: 28px;
    top: 488px;
    width: 8px;
    height: 48px;
    border-radius: 4px;
    background: #dcdcdc;
}
.right-rail {
    display: flex;
    flex-direction: column;
    align-items: center;
    gap: 24px;
    width: 57px;
    padding-top: 20px;
    flex: none;
}
.right-rail svg:nth-child(4) {
    margin-top: 1.5px;
}
.right-rail svg:nth-child(5) {
    margin-top: 1px;
}
.right-rail svg:nth-child(6) {
    margin-top: -1.5px;
}
.right-rail svg:nth-child(7) {
    margin-top: -2px;
}
.right-rail svg:nth-child(10) {
    margin-top: 6px;
}
.statusbar {
    display: flex;
    align-items: center;
    height: 24px;
    padding-left: 19px;
    border-top: 1px solid #d2d2d2;
    font-size: 11.5px;
    flex: none;
}
.nav-label {
    margin-left: 5px;
}
.first {
    margin-left: 21px;
}
.prev {
    margin-left: 24.5px;
}
.page-box {
    width: 110px;
    height: 19px;
    margin-left: 17px;
    border: 1px solid #c8c8c8;
    border-radius: 4px;
    background: #fff;
    line-height: 17px;
    text-align: center;
}
.next {
    margin-left: 17px;
}
.last {
    margin-left: 23.5px;
}
.hist-back {
    margin-left: 21.5px;
}
.hist-next {
    margin-left: 19px;
}
.status-right {
    display: flex;
    align-items: center;
    gap: 17px;
    margin-left: auto;
    padding-right: 18px;
}

.activate {
    position: absolute;
    left: 1073px;
    top: 650px;
    color: rgba(120, 120, 120, .5);
    pointer-events: none;
    white-space: nowrap;
}
.activate-head {
    font-size: 19px;
    line-height: 24px;
}
.activate-sub {
    font-size: 14.3px;
    line-height: 22px;
}

/* taskbar */
.taskbar {
    display: flex;
    height: 40px;
    background: #1f3a47;
    flex: none;
}
.tb-item {
    position: relative;
    display: flex;
    justify-content: center;
    align-items: center;
    width: 48.9px;
    height: 40px;
    flex: none;
}
.tb-item svg {
    max-height: 26px;
}
.tb-item.active-app {
    background: #4b5f69;
    border-bottom: 2px solid #76b9ed;
}
.tb-item.lit {
    border-bottom: 2px solid #76b9ed;
}
.tb-badge {
    position: absolute;
    left: 21px;
    top: 18px;
    width: 15px;
    height: 15px;
    border-radius: 50%;
    background: #1c1c1c;
    color: #eee;
    font-size: 10px;
    line-height: 15px;
    text-align: center;
}
.tray {
    display: flex;
    align-items: center;
    gap: 9px;
    margin-left: auto;
    color: #fff;
}
.tray-lang {
    font-size: 11.5px;
}
.clock {
    width: 70px;
    margin-left: -3px;
    font-size: 12px;
    line-height: 18px;
    text-align: center;
}
.notify {
    position: relative;
    width: 41px;
    height: 40px;
    margin-left: 4px;
    padding-top: 12px;
}
.notify-badge {
    position: absolute;
    left: 8px;
    top: 20px;
    width: 16px;
    height: 16px;
    border-radius: 50%;
    background: #333;
    border: 1px solid #777;
    font-size: 10px;
    line-height: 14px;
    text-align: center;
}
```
